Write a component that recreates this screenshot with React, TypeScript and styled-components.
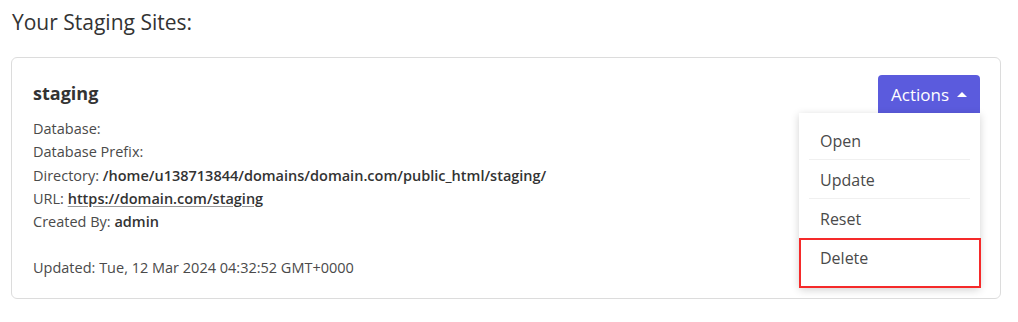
import styled, { createGlobalStyle } from "styled-components";

const GlobalStyle = createGlobalStyle`
  body {
    margin: 0;
    background: #ffffff;
    font-family: "Open Sans", "Lato", sans-serif;
    color: #333;
  }
`;

const Page = styled.div`
  padding: 8px 17px 0 11px;
`;

const Heading = styled.h2`
  margin: 0 0 21px 1px;
  font-size: 21px;
  font-weight: 400;
  line-height: 28px;
  color: #333;
`;

const Card = styled.div`
  border: 1px solid #dcdcdc;
  border-radius: 6px;
  padding: 17px 20px 18px 21px;
  display: flex;
  justify-content: space-between;
  align-items: flex-start;
`;

const Details = styled.div``;

const Title = styled.h3`
  margin: 5px 0 11px;
  font-size: 18px;
  font-weight: 700;
  line-height: 26px;
  color: #333;
`;

const Line = styled.div`
  font-size: 14.5px;
  line-height: 23.25px;
  color: #4a4a4a;
`;

const Strong = styled.strong`
  font-weight: 600;
  color: #333;
`;

const Link = styled.a`
  font-weight: 600;
  color: #333;
  text-decoration: underline;
  text-decoration-color: #9a9a9a;
  text-underline-offset: 2px;
`;

const Updated = styled(Line)`
  margin-top: 23px;
`;

const ActionsWrap = styled.div`
  position: relative;
`;

const ActionsButton = styled.button`
  display: flex;
  align-items: center;
  gap: 8px;
  height: 38px;
  padding: 0 13px 0 13px;
  border: none;
  border-radius: 4px 4px 0 0;
  background: #5b5bdd;
  color: #fff;
  font-family: inherit;
  font-size: 17px;
  cursor: pointer;
`;

const Caret = styled.span`
  width: 0;
  height: 0;
  border-left: 5px solid transparent;
  border-right: 5px solid transparent;
  border-bottom: 5px solid #fff;
  margin-top: 1px;
`;

const Menu = styled.ul`
  position: absolute;
  top: 38px;
  right: 0;
  width: 181px;
  margin: 0;
  padding: 8px 0 0;
  list-style: none;
  background: #fff;
  box-shadow: 0 2px 8px rgba(0, 0, 0, 0.18);
  border-radius: 0 0 4px 4px;
`;

const MenuItem = styled.li<{ $highlight?: boolean }>`
  margin: 0 10px;
  padding: 1px 11px 0;
  height: 39px;
  box-sizing: border-box;
  display: flex;
  align-items: center;
  font-size: 16px;
  color: #4a4a4a;
  border-bottom: 1px solid #f0f0f0;
  ${({ $highlight }) =>
    $highlight &&
    `
    margin: 0 -1px 0 0;
    padding: 0 21px 10px 19px;
    height: 50px;
    border: 2px solid #f52a2a;
  `}
  &:nth-last-child(2) {
    border-bottom: none;
  }
`;

const App = () => {
  return (
    <>
      <GlobalStyle />
      <Page>
        <Heading>Your Staging Sites:</Heading>
        <Card>
          <Details>
            <Title>staging</Title>
            <Line>Database:</Line>
            <Line>Database Prefix:</Line>
            <Line>
              Directory: <Strong>/home/u138713844/domains/domain.com/public_html/staging/</Strong>
            </Line>
            <Line>
              URL: <Link href="#">https://domain.com/staging</Link>
            </Line>
            <Line>
              Created By: <Strong>admin</Strong>
            </Line>
            <Updated>Updated: Tue, 12 Mar 2024 04:32:52 GMT+0000</Updated>
          </Details>
          <ActionsWrap>
            <ActionsButton>
              Actions <Caret />
            </ActionsButton>
            <Menu>
              <MenuItem>Open</MenuItem>
              <MenuItem>Update</MenuItem>
              <MenuItem>Reset</MenuItem>
              <MenuItem $highlight>Delete</MenuItem>
            </Menu>
          </ActionsWrap>
        </Card>
      </Page>
    </>
  );
};

export default App;
